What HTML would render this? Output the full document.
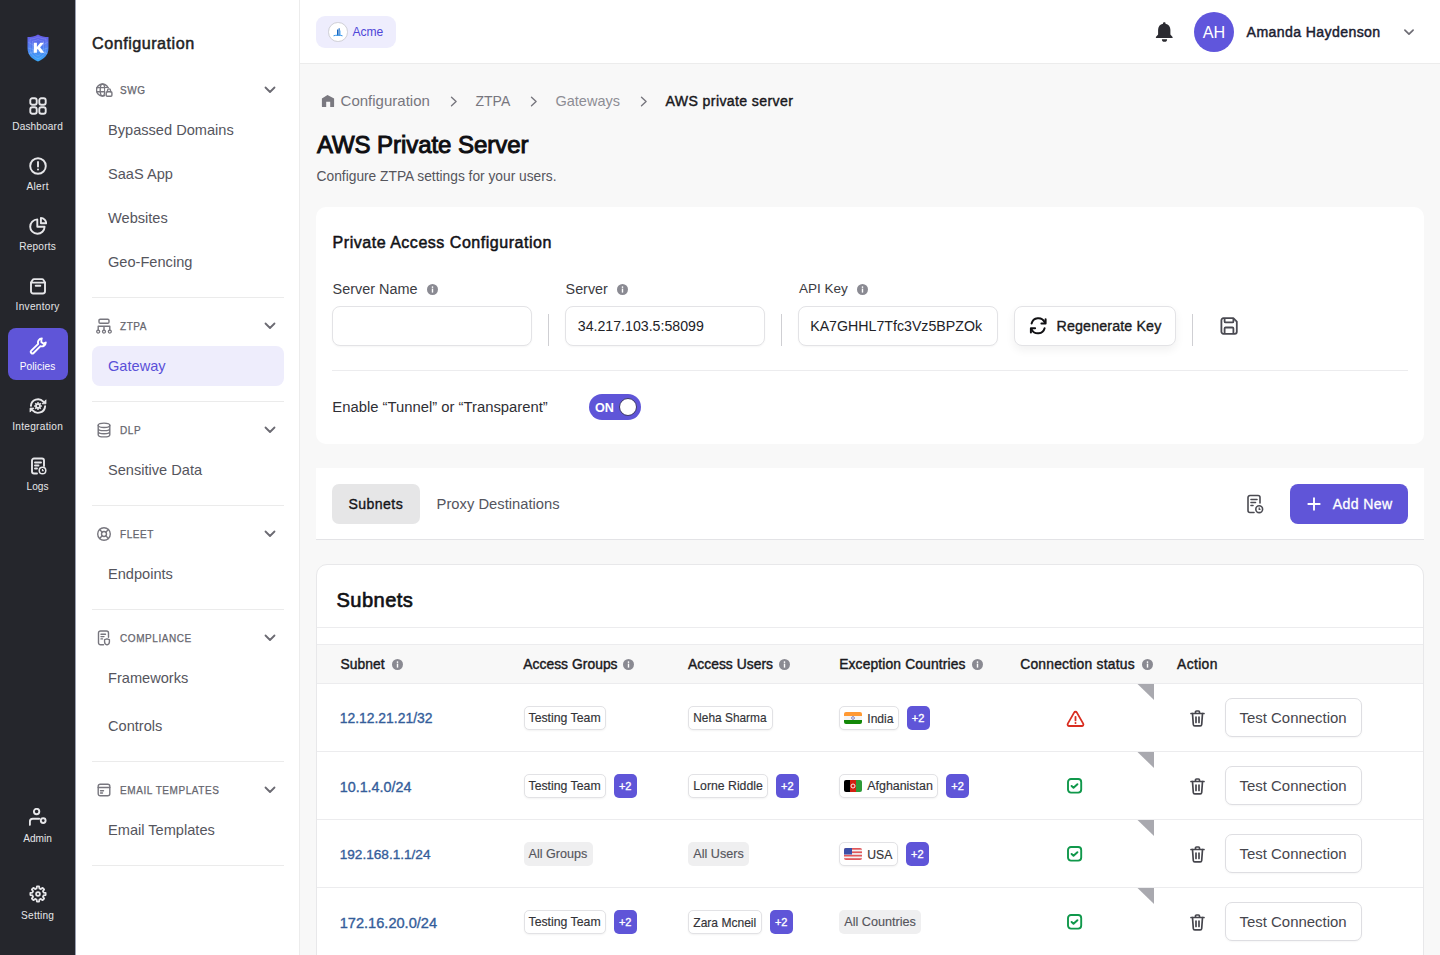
<!DOCTYPE html>
<html><head><meta charset="utf-8"><title>AWS Private Server</title>
<style>
*{box-sizing:border-box;margin:0;padding:0}
html,body{width:1440px;height:955px;overflow:hidden;background:#f8f8f8;font-family:"Liberation Sans",sans-serif}
.a{position:absolute;display:block}
.t{position:absolute;line-height:1;white-space:nowrap}
</style></head><body>
<div class="a" style="left:0px;top:0px;width:75px;height:955px;background:#25262c"></div>
<div class="a" style="left:75px;top:0px;width:1px;height:955px;background:#9a9fb0"></div>
<div class="a" style="left:76px;top:0px;width:223px;height:955px;background:#fff"></div>
<div class="a" style="left:299px;top:0px;width:1px;height:955px;background:#ececec"></div>
<div class="a" style="left:300px;top:0px;width:1140px;height:63px;background:#fff"></div>
<div class="a" style="left:300px;top:63px;width:1140px;height:1px;background:#ececec"></div>
<svg class="a" style="left:27px;top:34px;" width="22" height="28" viewBox="0 0 22 28"><defs><linearGradient id="lg" x1="0" y1="0" x2="0" y2="1"><stop offset="0" stop-color="#6a5ae8"/><stop offset="0.5" stop-color="#4d7ff0"/><stop offset="1" stop-color="#3aa8f8"/></linearGradient></defs>
<path d="M11 0.5 C8 2.5 4 3 0.5 3 V14 C0.5 21 5 25 11 27.5 C17 25 21.5 21 21.5 14 V3 C18 3 14 2.5 11 0.5Z" fill="url(#lg)"/>
<clipPath id="shc"><path d="M11 0.5 C8 2.5 4 3 0.5 3 V14 C0.5 21 5 25 11 27.5 C17 25 21.5 21 21.5 14 V3 C18 3 14 2.5 11 0.5Z"/></clipPath><g clip-path="url(#shc)" fill="none" stroke="#b9d4ff" stroke-opacity="0.45" stroke-width="0.5"><path d="M11 3 C8.5 4.5 5.5 5 3 5 V14 C3 19.5 6.5 22.8 11 24.8 C15.5 22.8 19 19.5 19 14 V5 C16.5 5 13.5 4.5 11 3Z"/><path d="M11 5.5 C9 6.6 7 7 5.5 7 V14 C5.5 18 8 20.6 11 22 C14 20.6 16.5 18 16.5 14 V7 C15 7 13 6.6 11 5.5Z"/><path d="M1 8l20 12M21 8L1 20M1 14l20 6M21 14L1 20"/></g><path d="M6.8 8.8h3.1v4.1l3.4-4.1h3.7l-3.9 4.4 4.1 5.6h-3.7l-2.7-3.8-.9 1v2.8H6.8z" fill="#fff"/></svg>
<div class="a" style="left:8px;top:328px;width:60px;height:52px;background:#5f55d8;border-radius:8px"></div>
<div class="t" style="left:0.07px;width:75px;text-align:center;top:121.85px;font-size:10.1px;letter-spacing:0.143px;color:#e6e6e9">Dashboard</div>
<div class="t" style="left:0.15px;width:75px;text-align:center;top:181.75px;font-size:10.1px;letter-spacing:0.307px;color:#e6e6e9">Alert</div>
<div class="t" style="left:0.11px;width:75px;text-align:center;top:241.75px;font-size:10.1px;letter-spacing:0.219px;color:#e6e6e9">Reports</div>
<div class="t" style="left:0.14px;width:75px;text-align:center;top:301.75px;font-size:10.1px;letter-spacing:0.284px;color:#e6e6e9">Inventory</div>
<div class="t" style="left:0.06px;width:75px;text-align:center;top:361.75px;font-size:10.1px;letter-spacing:0.124px;color:#fff">Policies</div>
<div class="t" style="left:0.14px;width:75px;text-align:center;top:421.75px;font-size:10.1px;letter-spacing:0.288px;color:#e6e6e9">Integration</div>
<div class="t" style="left:0.02px;width:75px;text-align:center;top:481.75px;font-size:10.1px;letter-spacing:0.048px;color:#e6e6e9">Logs</div>
<div class="t" style="left:-0.01px;width:75px;text-align:center;top:833.75px;font-size:10.1px;letter-spacing:-0.027px;color:#e6e6e9">Admin</div>
<div class="t" style="left:0.11px;width:75px;text-align:center;top:910.55px;font-size:10.1px;letter-spacing:0.223px;color:#e6e6e9">Setting</div>
<svg class="a" style="left:29px;top:97px;" width="18" height="18" viewBox="0 0 18 18"><g fill="none" stroke="#e6e6e9" stroke-width="1.9" stroke-linecap="round" stroke-linejoin="round"><rect x="1.3" y="1.3" width="6.4" height="6.4" rx="2"/><rect x="10.3" y="1.3" width="6.4" height="6.4" rx="2"/><rect x="1.3" y="10.3" width="6.4" height="6.4" rx="2"/><rect x="10.3" y="10.3" width="6.4" height="6.4" rx="2"/></g></svg>
<svg class="a" style="left:29px;top:157px;" width="18" height="18" viewBox="0 0 18 18"><g fill="none" stroke="#e6e6e9" stroke-width="1.9" stroke-linecap="round" stroke-linejoin="round"><circle cx="9" cy="9" r="7.8"/><path d="M9 5v4.5"/></g><circle cx="9" cy="12.4" r="1" fill="#e6e6e9"/></svg>
<svg class="a" style="left:29px;top:217px;" width="18" height="18" viewBox="0 0 18 18"><g fill="none" stroke="#e6e6e9" stroke-width="1.9" stroke-linecap="round" stroke-linejoin="round"><path d="M8.3 2.4A7.2 7.2 0 1 0 15.6 9.7H8.3Z"/><path d="M11.9 1V6.3h5.3A5.3 5.3 0 0 0 11.9 1Z"/></g></svg>
<svg class="a" style="left:29px;top:277px;" width="18" height="18" viewBox="0 0 18 18"><g fill="none" stroke="#e6e6e9" stroke-width="1.9" stroke-linecap="round" stroke-linejoin="round"><path d="M2 5.6L3.6 2.9A1.6 1.6 0 0 1 5 2.1H13A1.6 1.6 0 0 1 14.4 2.9L16 5.6V14.3A2.2 2.2 0 0 1 13.8 16.5H4.2A2.2 2.2 0 0 1 2 14.3Z"/><path d="M2 5.6H16"/><path d="M6.7 8.7H11.3"/></g></svg>
<svg class="a" style="left:29px;top:337px;" width="18" height="18" viewBox="0 0 18 18"><path d="M12.8 1.5a4 4 0 0 0-3.6 5.3L2.3 13.7a1.6 1.6 0 0 0 2.3 2.3l6.9-6.9a4 4 0 0 0 5.3-3.6l-2.3 1.2-2-1.4-.2-2.4z" fill="none" stroke="#fff" stroke-width="1.9" stroke-linejoin="round"/></svg>
<svg class="a" style="left:29px;top:397px;" width="18" height="18" viewBox="0 0 18 18"><g fill="none" stroke="#e6e6e9" stroke-width="1.9" stroke-linecap="round"><path d="M1.9 8.8A7.1 7.1 0 0 1 14.3 4.7"/><path d="M16.1 9.3A7.1 7.1 0 0 1 3.7 13.4"/></g><g fill="#e6e6e9" stroke="#e6e6e9" stroke-width="0.8" stroke-linejoin="round"><path d="M17 2.8V6.8H13z"/><path d="M1 15.1V11.1H5z"/></g><rect x="8.2" y="5.1" width="1.6" height="2" rx="0.4" transform="rotate(0 9 9)" fill="#e6e6e9"/><rect x="8.2" y="5.1" width="1.6" height="2" rx="0.4" transform="rotate(45 9 9)" fill="#e6e6e9"/><rect x="8.2" y="5.1" width="1.6" height="2" rx="0.4" transform="rotate(90 9 9)" fill="#e6e6e9"/><rect x="8.2" y="5.1" width="1.6" height="2" rx="0.4" transform="rotate(135 9 9)" fill="#e6e6e9"/><rect x="8.2" y="5.1" width="1.6" height="2" rx="0.4" transform="rotate(180 9 9)" fill="#e6e6e9"/><rect x="8.2" y="5.1" width="1.6" height="2" rx="0.4" transform="rotate(225 9 9)" fill="#e6e6e9"/><rect x="8.2" y="5.1" width="1.6" height="2" rx="0.4" transform="rotate(270 9 9)" fill="#e6e6e9"/><rect x="8.2" y="5.1" width="1.6" height="2" rx="0.4" transform="rotate(315 9 9)" fill="#e6e6e9"/><circle cx="9" cy="9" r="2.7" fill="#e6e6e9"/><circle cx="9" cy="9" r="1.1" fill="#25262c"/></svg>
<svg class="a" style="left:29px;top:457px;" width="18" height="18" viewBox="0 0 18 18"><g fill="none" stroke="#e6e6e9" stroke-width="1.9" stroke-linecap="round" stroke-linejoin="round"><path d="M8 16.5H5a2 2 0 0 1-2-2v-11a2 2 0 0 1 2-2h8a2 2 0 0 1 2 2V9"/><path d="M6 5.5h6M6 8.5h3.5M6 11.5h2"/></g><circle cx="13.5" cy="13.5" r="3.3" fill="none" stroke="#e6e6e9" stroke-width="1.5"/><path d="M13.5 12v1.6h1.2" fill="none" stroke="#e6e6e9" stroke-width="1.2"/></svg>
<svg class="a" style="left:29px;top:808px;" width="18" height="19" viewBox="0 0 18 19"><g fill="none" stroke="#e6e6e9" stroke-width="1.9" stroke-linecap="round" stroke-linejoin="round"><circle cx="7.6" cy="3.6" r="2.7"/><path d="M0.9 16.8v-3.2a2.8 2.8 0 0 1 2.8-2.8h6.5"/><circle cx="14.2" cy="12.6" r="2.4"/></g></svg>
<svg class="a" style="left:29px;top:885px;" width="18" height="18" viewBox="0 0 18 18"><path d="M7.52 3.49 L7.93 1.37 L10.07 1.37 L10.48 3.49 L11.85 4.06 L13.63 2.85 L15.15 4.37 L13.94 6.15 L14.51 7.52 L16.63 7.93 L16.63 10.07 L14.51 10.48 L13.94 11.85 L15.15 13.63 L13.63 15.15 L11.85 13.94 L10.48 14.51 L10.07 16.63 L7.93 16.63 L7.52 14.51 L6.15 13.94 L4.37 15.15 L2.85 13.63 L4.06 11.85 L3.49 10.48 L1.37 10.07 L1.37 7.93 L3.49 7.52 L4.06 6.15 L2.85 4.37 L4.37 2.85 L6.15 4.06Z" fill="none" stroke="#e6e6e9" stroke-width="1.8" stroke-linejoin="round"/><circle cx="9" cy="9" r="1.9" fill="none" stroke="#e6e6e9" stroke-width="1.8"/></svg>
<div class="t" style="left:92px;top:35.09px;font-size:16.2px;color:#1f1f24;letter-spacing:0.488px;-webkit-text-stroke:0.5px #1f1f24">Configuration</div>
<div class="t" style="left:120px;top:85.53px;font-size:10px;color:#66666e;letter-spacing:0.57px;-webkit-text-stroke:0.25px #66666e">SWG</div>
<svg class="a" style="left:264px;top:85.7px;" width="12" height="8" viewBox="0 0 12 8"><path d="M1.5 1.5l4.5 4.5 4.5-4.5" fill="none" stroke="#6b6a72" stroke-width="1.8" stroke-linecap="round" stroke-linejoin="round"/></svg>
<svg class="a" style="left:96px;top:83px;" width="17" height="15" viewBox="0 0 17 15"><g fill="none" stroke="#77767e" stroke-width="1.4" stroke-linecap="round" stroke-linejoin="round"><circle cx="6.5" cy="7" r="6"/><ellipse cx="6.5" cy="7" rx="2.3" ry="6"/><path d="M0.8 4.6h11.4M0.8 8.8h11.4"/></g><rect x="9.2" y="5.2" width="7.6" height="9.8" fill="#fff"/><g fill="none" stroke="#77767e" stroke-width="1.4" stroke-linecap="round" stroke-linejoin="round"><rect x="10.2" y="8.7" width="5.7" height="4.5" rx="1"/><path d="M11.5 8.7V7.4a1.5 1.5 0 0 1 3 0v1.3"/></g></svg>
<div class="t" style="left:108px;top:122.64px;font-size:14.6px;color:#55555d;">Bypassed Domains</div>
<div class="t" style="left:108px;top:166.64px;font-size:14.6px;color:#55555d;">SaaS App</div>
<div class="t" style="left:108px;top:210.64px;font-size:14.6px;color:#55555d;">Websites</div>
<div class="t" style="left:108px;top:254.64px;font-size:14.6px;color:#55555d;">Geo-Fencing</div>
<div class="a" style="left:92px;top:297px;width:192px;height:1px;background:#ebebeb"></div>
<div class="t" style="left:120px;top:321.84px;font-size:10px;color:#66666e;letter-spacing:0.57px;-webkit-text-stroke:0.25px #66666e">ZTPA</div>
<svg class="a" style="left:264px;top:322.0px;" width="12" height="8" viewBox="0 0 12 8"><path d="M1.5 1.5l4.5 4.5 4.5-4.5" fill="none" stroke="#6b6a72" stroke-width="1.8" stroke-linecap="round" stroke-linejoin="round"/></svg>
<svg class="a" style="left:96px;top:318px;" width="16" height="16" viewBox="0 0 16 16"><g fill="none" stroke="#77767e" stroke-width="1.4" stroke-linecap="round" stroke-linejoin="round"><rect x="3" y="1.2" width="10" height="4" rx="1.2"/><path d="M2.2 12.5V8.2h11.6v4.3M8 8.2v4.3"/></g><g fill="none" stroke="#77767e" stroke-width="1.3"><circle cx="2.2" cy="13.6" r="1.5"/><circle cx="8" cy="13.6" r="1.5"/><circle cx="13.8" cy="13.6" r="1.5"/></g></svg>
<div class="a" style="left:92px;top:346px;width:192px;height:40px;background:#eeedfc;border-radius:8px"></div>
<div class="t" style="left:108px;top:358.64px;font-size:14.6px;color:#5a50d8;">Gateway</div>
<div class="a" style="left:92px;top:401px;width:192px;height:1px;background:#ebebeb"></div>
<div class="t" style="left:120px;top:425.54px;font-size:10px;color:#66666e;letter-spacing:0.57px;-webkit-text-stroke:0.25px #66666e">DLP</div>
<svg class="a" style="left:264px;top:425.7px;" width="12" height="8" viewBox="0 0 12 8"><path d="M1.5 1.5l4.5 4.5 4.5-4.5" fill="none" stroke="#6b6a72" stroke-width="1.8" stroke-linecap="round" stroke-linejoin="round"/></svg>
<svg class="a" style="left:96px;top:422px;" width="16" height="16" viewBox="0 0 16 16"><g fill="none" stroke="#77767e" stroke-width="1.4" stroke-linecap="round" stroke-linejoin="round"><ellipse cx="8" cy="3.3" rx="5.8" ry="2.2"/><path d="M2.2 3.3v9.4c0 1.2 2.6 2.2 5.8 2.2s5.8-1 5.8-2.2V3.3M2.2 6.4c0 1.2 2.6 2.2 5.8 2.2s5.8-1 5.8-2.2M2.2 9.5c0 1.2 2.6 2.2 5.8 2.2s5.8-1 5.8-2.2"/></g></svg>
<div class="t" style="left:108px;top:462.64px;font-size:14.6px;color:#55555d;">Sensitive Data</div>
<div class="a" style="left:92px;top:505px;width:192px;height:1px;background:#ebebeb"></div>
<div class="t" style="left:120px;top:529.74px;font-size:10px;color:#66666e;letter-spacing:0.57px;-webkit-text-stroke:0.25px #66666e">FLEET</div>
<svg class="a" style="left:264px;top:529.9000000000001px;" width="12" height="8" viewBox="0 0 12 8"><path d="M1.5 1.5l4.5 4.5 4.5-4.5" fill="none" stroke="#6b6a72" stroke-width="1.8" stroke-linecap="round" stroke-linejoin="round"/></svg>
<svg class="a" style="left:96px;top:526px;" width="16" height="16" viewBox="0 0 16 16"><g fill="none" stroke="#77767e" stroke-width="1.4" stroke-linecap="round" stroke-linejoin="round"><circle cx="8" cy="8" r="6.3"/><circle cx="8" cy="8" r="2.5"/><path d="M3.6 3.6l2.6 2.6M12.4 3.6l-2.6 2.6M3.6 12.4l2.6-2.6M12.4 12.4l-2.6-2.6"/></g></svg>
<div class="t" style="left:108px;top:566.64px;font-size:14.6px;color:#55555d;">Endpoints</div>
<div class="a" style="left:92px;top:609px;width:192px;height:1px;background:#ebebeb"></div>
<div class="t" style="left:120px;top:633.83px;font-size:10px;color:#66666e;letter-spacing:0.57px;-webkit-text-stroke:0.25px #66666e">COMPLIANCE</div>
<svg class="a" style="left:264px;top:634.0px;" width="12" height="8" viewBox="0 0 12 8"><path d="M1.5 1.5l4.5 4.5 4.5-4.5" fill="none" stroke="#6b6a72" stroke-width="1.8" stroke-linecap="round" stroke-linejoin="round"/></svg>
<svg class="a" style="left:97px;top:630px;" width="14" height="16" viewBox="0 0 14 16"><g fill="none" stroke="#77767e" stroke-width="1.4" stroke-linecap="round" stroke-linejoin="round"><path d="M6.5 14.8H3.5a2 2 0 0 1-2-2V3a2 2 0 0 1 2-2h6a2 2 0 0 1 2 2v4.3"/><path d="M4 4.3h4.5M4 6.6h3M4 8.9h1.5"/><path d="M10 8.8l2.4.8v2.3c0 1.6-1.1 2.6-2.4 3-1.3-.4-2.4-1.4-2.4-3V9.6z"/></g></svg>
<div class="t" style="left:108px;top:670.84px;font-size:14.6px;color:#55555d;">Frameworks</div>
<div class="t" style="left:108px;top:718.74px;font-size:14.6px;color:#55555d;">Controls</div>
<div class="a" style="left:92px;top:761px;width:192px;height:1px;background:#ebebeb"></div>
<div class="t" style="left:120px;top:785.83px;font-size:10px;color:#66666e;letter-spacing:0.57px;-webkit-text-stroke:0.25px #66666e">EMAIL TEMPLATES</div>
<svg class="a" style="left:264px;top:786.0px;" width="12" height="8" viewBox="0 0 12 8"><path d="M1.5 1.5l4.5 4.5 4.5-4.5" fill="none" stroke="#6b6a72" stroke-width="1.8" stroke-linecap="round" stroke-linejoin="round"/></svg>
<svg class="a" style="left:97px;top:783px;" width="14" height="14" viewBox="0 0 14 14"><g fill="none" stroke="#77767e" stroke-width="1.4" stroke-linecap="round" stroke-linejoin="round"><rect x="1.2" y="1.2" width="11.6" height="11.6" rx="2"/><path d="M1.2 4.5h11.6M3.5 7.7h3M3.5 10h2"/></g></svg>
<div class="t" style="left:108px;top:822.84px;font-size:14.6px;color:#55555d;">Email Templates</div>
<div class="a" style="left:92px;top:865px;width:192px;height:1px;background:#ebebeb"></div>
<div class="a" style="left:316px;top:16px;width:80px;height:32px;background:#eeedfd;border-radius:9px"></div>
<div class="a" style="left:328.3px;top:22.2px;width:19.5px;height:19.5px;background:#fff;border:1px solid #cfcfd6;border-radius:50%"></div>
<svg class="a" style="left:330.8px;top:24.8px;" width="14" height="14" viewBox="0 0 14 14"><path d="M6 4.5h1.2v6H6zM7.6 3.2h1.1v7.3H7.6z" fill="#1565c0"/><path d="M8.8 5.5h1v5h-1z" fill="#90caf9"/><path d="M2.5 10.8c2-.8 7-.8 9 0" fill="none" stroke="#1e88e5" stroke-width="0.9"/></svg>
<div class="t" style="left:352.4px;top:26.36px;font-size:12.1px;color:#4f46d8;">Acme</div>
<svg class="a" style="left:1155px;top:21px;" width="19" height="22" viewBox="0 0 19 22"><path d="M9.5 1.2c.6 0 1 .4 1 .9v.6c3.1.6 4.9 3 4.9 6v4.8l2.2 2.4v1H0.9v-1l2.2-2.4V8.7c0-3 1.8-5.4 4.9-6v-.6c0-.5.4-.9 1-.9z" fill="#2b2b31"/><path d="M6.9 18.2h5.2a2.6 2.6 0 0 1-5.2 0z" fill="#2b2b31"/></svg>
<div class="a" style="left:1194px;top:12px;width:40px;height:40px;background:#6056dc;border-radius:50%"></div>
<div class="t" style="left:1194px;width:40px;text-align:center;top:24.29px;font-size:16.2px;color:#fff">AH</div>
<div class="t" style="left:1246.6px;top:25.36px;font-size:14.11px;color:#1b2030;letter-spacing:0.383px;-webkit-text-stroke:0.45px #1b2030">Amanda Haydenson</div>
<svg class="a" style="left:1403px;top:28px;" width="12" height="8" viewBox="0 0 12 8"><path d="M1.9 2.1l4.1 4 4.1-4" fill="none" stroke="#6e6d75" stroke-width="1.7" stroke-linecap="round" stroke-linejoin="round"/></svg>
<svg class="a" style="left:321px;top:94px;" width="14" height="14" viewBox="0 0 14 14"><path d="M6.5 0.9L13.1 4.5V12.5a0.6 0.6 0 0 1-0.6 0.6H9.2V7.7H5.2V13.1H1.5a0.6 0.6 0 0 1-0.6-0.6V4.5z" fill="#7a7980"/></svg>
<div class="t" style="left:340.6px;top:93.10px;font-size:15.0px;color:#77767e;">Configuration</div>
<svg class="a" style="left:449.5px;top:96px;" width="8" height="11" viewBox="0 0 8 11"><path d="M1.5 1.2l4.6 4.3-4.6 4.3" fill="none" stroke="#77767e" stroke-width="1.4" stroke-linecap="round" stroke-linejoin="round"/></svg>
<div class="t" style="left:475.5px;top:93.95px;font-size:14.0px;color:#77767e;">ZTPA</div>
<svg class="a" style="left:529.5px;top:96px;" width="8" height="11" viewBox="0 0 8 11"><path d="M1.5 1.2l4.6 4.3-4.6 4.3" fill="none" stroke="#77767e" stroke-width="1.4" stroke-linecap="round" stroke-linejoin="round"/></svg>
<div class="t" style="left:555.5px;top:93.53px;font-size:14.5px;color:#8d8d94;">Gateways</div>
<svg class="a" style="left:639.5px;top:96px;" width="8" height="11" viewBox="0 0 8 11"><path d="M1.5 1.2l4.6 4.3-4.6 4.3" fill="none" stroke="#77767e" stroke-width="1.4" stroke-linecap="round" stroke-linejoin="round"/></svg>
<div class="t" style="left:665.6px;top:93.86px;font-size:14.11px;color:#18181c;letter-spacing:0.372px;-webkit-text-stroke:0.42px #18181c">AWS private server</div>
<div class="t" style="left:316.9px;top:132.57px;font-size:24.02px;color:#0e0e11;letter-spacing:-0.065px;-webkit-text-stroke:0.95px #0e0e11">AWS Private Server</div>
<div class="t" style="left:316.6px;top:169.94px;font-size:13.77px;color:#55555c;">Configure ZTPA settings for your users.</div>
<div class="a" style="left:316px;top:207px;width:1108px;height:237px;background:#fff;border-radius:10px"></div>
<div class="t" style="left:332.6px;top:234.31px;font-size:16.06px;color:#121216;letter-spacing:0.503px;-webkit-text-stroke:0.5px #121216">Private Access Configuration</div>
<div class="t" style="left:332.6px;top:281.69px;font-size:14.43px;color:#3b3b42;">Server Name</div>
<svg class="a" style="left:426.5px;top:284.0px;" width="11" height="11" viewBox="0 0 11 11"><circle cx="5.5" cy="5.5" r="5.5" fill="#8a8a92"/><rect x="4.8" y="4.6" width="1.4" height="4" fill="#fff"/><circle cx="5.5" cy="3.1" r="0.85" fill="#fff"/></svg>
<div class="t" style="left:565.6px;top:281.77px;font-size:14.33px;color:#3b3b42;">Server</div>
<svg class="a" style="left:616.5px;top:284.0px;" width="11" height="11" viewBox="0 0 11 11"><circle cx="5.5" cy="5.5" r="5.5" fill="#8a8a92"/><rect x="4.8" y="4.6" width="1.4" height="4" fill="#fff"/><circle cx="5.5" cy="3.1" r="0.85" fill="#fff"/></svg>
<div class="t" style="left:798.9px;top:282.44px;font-size:13.54px;color:#3b3b42;">API Key</div>
<svg class="a" style="left:856.5px;top:284.0px;" width="11" height="11" viewBox="0 0 11 11"><circle cx="5.5" cy="5.5" r="5.5" fill="#8a8a92"/><rect x="4.8" y="4.6" width="1.4" height="4" fill="#fff"/><circle cx="5.5" cy="3.1" r="0.85" fill="#fff"/></svg>
<div class="a" style="left:332px;top:306px;width:200px;height:40px;background:#fff;border:1px solid #e3e3e6;border-radius:8px;box-shadow:0 1px 2px rgba(0,0,0,0.04)"></div>
<div class="a" style="left:548px;top:314px;width:1px;height:32px;background:#cfcfd3"></div>
<div class="a" style="left:565px;top:306px;width:200px;height:40px;background:#fff;border:1px solid #e3e3e6;border-radius:8px;box-shadow:0 1px 2px rgba(0,0,0,0.04)"></div>
<div class="t" style="left:577.8px;top:318.81px;font-size:14.16px;color:#222227;">34.217.103.5:58099</div>
<div class="a" style="left:781px;top:314px;width:1px;height:32px;background:#cfcfd3"></div>
<div class="a" style="left:798px;top:306px;width:200px;height:40px;background:#fff;border:1px solid #e3e3e6;border-radius:8px;box-shadow:0 1px 2px rgba(0,0,0,0.04)"></div>
<div class="t" style="left:810.2px;top:318.78px;font-size:14.2px;color:#222227;">KA7GHHL7Tfc3Vz5BPZOk</div>
<div class="a" style="left:1014px;top:306px;width:162px;height:40px;background:#fff;border:1px solid #e3e3e6;border-radius:8px;box-shadow:0 4px 10px rgba(0,0,0,0.06)"></div>
<svg class="a" style="left:1029px;top:317px;" width="18" height="18" viewBox="0 0 18 18"><g fill="none" stroke="#111114" stroke-width="2" stroke-linecap="round" stroke-linejoin="round"><path d="M2.6 6.5A6.9 6.9 0 0 1 15.6 5.2"/><path d="M16.6 2.3V6.6H12.4"/><path d="M15.6 11.2A6.9 6.9 0 0 1 2.8 12.6"/><path d="M1.9 15.6V11.2H6.1"/></g></svg>
<div class="t" style="left:1056.6px;top:319.24px;font-size:14.25px;color:#1b1b20;letter-spacing:0.130px;-webkit-text-stroke:0.35px #1b1b20">Regenerate Key</div>
<div class="a" style="left:1192px;top:314px;width:1px;height:32px;background:#cfcfd3"></div>
<svg class="a" style="left:1219px;top:316.5px;" width="20" height="19" viewBox="0 0 20 19"><g fill="none" stroke="#4a4a52" stroke-width="1.8" stroke-linejoin="round"><path d="M2.4 3.2a2 2 0 0 1 2-2h9.9l3.5 3.5v10.1a2 2 0 0 1-2 2H4.4a2 2 0 0 1-2-2z"/><path d="M5.6 1.2v3.2a1 1 0 0 0 1 1h6.8a1 1 0 0 0 1-1V1.6"/><path d="M5.6 16.8v-5.3a1 1 0 0 1 1-1h6.8a1 1 0 0 1 1 1v5.3"/></g></svg>
<div class="a" style="left:332px;top:370px;width:1076px;height:1px;background:#ececee"></div>
<div class="t" style="left:332.3px;top:400.35px;font-size:14.82px;color:#2f2f35;">Enable “Tunnel” or “Transparent”</div>
<div class="a" style="left:589px;top:394px;width:52px;height:26px;background:#5f55d8;border-radius:13px"></div>
<div class="t" style="left:595px;top:402.07px;font-size:12.67px;color:#fff;font-weight:700;">ON</div>
<div class="a" style="left:619px;top:398px;width:18px;height:18px;background:#fff;border:1.2px solid #3b3766;border-radius:50%"></div>
<div class="a" style="left:316px;top:468px;width:1108px;height:71px;background:#fff"></div>
<div class="a" style="left:316px;top:539px;width:1108px;height:1px;background:#e3e3e6"></div>
<div class="a" style="left:332px;top:484px;width:88px;height:40px;background:#e6e6e7;border-radius:7px"></div>
<div class="t" style="left:348.4px;top:497.26px;font-size:14.11px;color:#141418;letter-spacing:0.431px;-webkit-text-stroke:0.35px #141418">Subnets</div>
<div class="t" style="left:436.6px;top:496.91px;font-size:14.75px;color:#55555e;">Proxy Destinations</div>
<svg class="a" style="left:1246px;top:494px;" width="18" height="20" viewBox="0 0 18 20"><g fill="none" stroke="#4b4b52" stroke-width="1.6" stroke-linecap="round" stroke-linejoin="round"><path d="M8 18.5H4a2 2 0 0 1-2-2v-13a2 2 0 0 1 2-2h8a2 2 0 0 1 2 2v5.5"/><path d="M5 5.5h6M5 8.5h4.5M5 11.5h2"/></g><circle cx="13.2" cy="15.2" r="3.4" fill="none" stroke="#4b4b52" stroke-width="1.6"/><path d="M13.2 13.6v1.8h1.3" fill="none" stroke="#4b4b52" stroke-width="1.2"/></svg>
<div class="a" style="left:1290px;top:484px;width:118px;height:40px;background:#6055d8;border-radius:8px"></div>
<svg class="a" style="left:1306px;top:496px;" width="16" height="16" viewBox="0 0 16 16"><path d="M8 1.6v12.8M1.6 8h12.8" stroke="#fff" stroke-width="1.9" stroke-linecap="butt"/></svg>
<div class="t" style="left:1332.8px;top:496.96px;font-size:14.11px;color:#fff;letter-spacing:0.363px;-webkit-text-stroke:0.3px #fff">Add New</div>
<div class="a" style="left:316px;top:564px;width:1108px;height:420px;background:#fff;border:1px solid #e8e8ea;border-radius:11px"></div>
<div class="t" style="left:336.4px;top:589.98px;font-size:20.11px;color:#111114;letter-spacing:0.457px;-webkit-text-stroke:0.65px #111114">Subnets</div>
<div class="a" style="left:317px;top:627px;width:1106px;height:1px;background:#ececee"></div>
<div class="a" style="left:317px;top:644px;width:1106px;height:40px;background:#f8f8f8;border-top:1px solid #ececee;border-bottom:1px solid #ececee"></div>
<div class="t" style="left:340.4px;top:657.59px;font-size:13.83px;color:#1a1a1e;letter-spacing:0.076px;-webkit-text-stroke:0.42px #1a1a1e">Subnet</div>
<svg class="a" style="left:391.5px;top:658.5px;" width="11" height="11" viewBox="0 0 11 11"><circle cx="5.5" cy="5.5" r="5.5" fill="#8a8a92"/><rect x="4.8" y="4.6" width="1.4" height="4" fill="#fff"/><circle cx="5.5" cy="3.1" r="0.85" fill="#fff"/></svg>
<div class="t" style="left:523.2px;top:657.59px;font-size:13.83px;color:#1a1a1e;letter-spacing:0.049px;-webkit-text-stroke:0.42px #1a1a1e">Access Groups</div>
<svg class="a" style="left:623.0px;top:658.5px;" width="11" height="11" viewBox="0 0 11 11"><circle cx="5.5" cy="5.5" r="5.5" fill="#8a8a92"/><rect x="4.8" y="4.6" width="1.4" height="4" fill="#fff"/><circle cx="5.5" cy="3.1" r="0.85" fill="#fff"/></svg>
<div class="t" style="left:688px;top:657.59px;font-size:13.83px;color:#1a1a1e;letter-spacing:0.039px;-webkit-text-stroke:0.42px #1a1a1e">Access Users</div>
<svg class="a" style="left:779.2px;top:658.5px;" width="11" height="11" viewBox="0 0 11 11"><circle cx="5.5" cy="5.5" r="5.5" fill="#8a8a92"/><rect x="4.8" y="4.6" width="1.4" height="4" fill="#fff"/><circle cx="5.5" cy="3.1" r="0.85" fill="#fff"/></svg>
<div class="t" style="left:839.2px;top:657.59px;font-size:13.83px;color:#1a1a1e;letter-spacing:0.139px;-webkit-text-stroke:0.42px #1a1a1e">Exception Countries</div>
<svg class="a" style="left:972.4px;top:658.5px;" width="11" height="11" viewBox="0 0 11 11"><circle cx="5.5" cy="5.5" r="5.5" fill="#8a8a92"/><rect x="4.8" y="4.6" width="1.4" height="4" fill="#fff"/><circle cx="5.5" cy="3.1" r="0.85" fill="#fff"/></svg>
<div class="t" style="left:1020.2px;top:657.59px;font-size:13.83px;color:#1a1a1e;letter-spacing:0.229px;-webkit-text-stroke:0.42px #1a1a1e">Connection status</div>
<svg class="a" style="left:1141.5px;top:658.5px;" width="11" height="11" viewBox="0 0 11 11"><circle cx="5.5" cy="5.5" r="5.5" fill="#8a8a92"/><rect x="4.8" y="4.6" width="1.4" height="4" fill="#fff"/><circle cx="5.5" cy="3.1" r="0.85" fill="#fff"/></svg>
<div class="t" style="left:1177.1px;top:657.59px;font-size:13.83px;color:#1a1a1e;letter-spacing:0.361px;-webkit-text-stroke:0.42px #1a1a1e">Action</div>
<svg class="a" style="left:1137px;top:684px;" width="17" height="16" viewBox="0 0 17 16"><path d="M0.5 0H17V16z" fill="#a9a9af"/></svg>
<div class="t" style="left:339.7px;top:712.23px;font-size:13.91px;color:#345d9a;-webkit-text-stroke:0.35px #345d9a">12.12.21.21/32</div>
<div class="a" style="left:523.5px;top:706px;width:82.2px;height:23.5px;background:#fff;border:1px solid #e2e2e5;border-radius:5px;box-shadow:0 1px 2px rgba(0,0,0,0.05)"></div>
<div class="t" style="left:528.5px;top:712.40px;font-size:12.29px;color:#333338;-webkit-text-stroke:0.15px #333338">Testing Team</div>
<div class="a" style="left:688.3px;top:706px;width:84.7px;height:23.5px;background:#fff;border:1px solid #e2e2e5;border-radius:5px;box-shadow:0 1px 2px rgba(0,0,0,0.05)"></div>
<div class="t" style="left:693.3px;top:712.74px;font-size:11.88px;color:#333338;-webkit-text-stroke:0.15px #333338">Neha Sharma</div>
<div class="a" style="left:839.3px;top:706px;width:59.3px;height:23.5px;background:#fff;border:1px solid #e2e2e5;border-radius:5px;box-shadow:0 1px 2px rgba(0,0,0,0.05)"></div>
<svg class="a" style="left:844.3px;top:712px;" width="18" height="12" viewBox="0 0 18 12"><defs><clipPath id="cf"><rect width="18" height="12" rx="2"/></clipPath></defs><g clip-path="url(#cf)"><rect width="18" height="4" fill="#ff9933"/><rect y="4" width="18" height="4" fill="#f5f5f5"/><rect y="8" width="18" height="4" fill="#138808"/><circle cx="9" cy="6" r="1.4" fill="none" stroke="#3a3aa0" stroke-width="0.6"/></g></svg>
<div class="t" style="left:867.3px;top:712.57px;font-size:12.08px;color:#333338;-webkit-text-stroke:0.15px #333338">India</div>
<div class="a" style="left:906.5999999999999px;top:706px;width:23px;height:24px;background:#5f55d8;border-radius:5px"></div>
<div class="t" style="left:906.5999999999999px;width:23px;text-align:center;top:712.99px;font-size:11px;color:#fff;-webkit-text-stroke:0.35px #fff">+2</div>
<svg class="a" style="left:1066px;top:709.5px;" width="19" height="17" viewBox="0 0 19 17"><path d="M8.1 2.6a1.6 1.6 0 0 1 2.8 0l6.3 11a1.6 1.6 0 0 1-1.4 2.4H3.2a1.6 1.6 0 0 1-1.4-2.4z" fill="none" stroke="#d92d20" stroke-width="1.8" stroke-linejoin="round"/><path d="M9.5 6.8v3.6" stroke="#d92d20" stroke-width="1.8" stroke-linecap="round"/><circle cx="9.5" cy="12.9" r="1" fill="#d92d20"/></svg>
<svg class="a" style="left:1189.5px;top:709.5px;" width="15" height="17" viewBox="0 0 15 17"><g fill="none" stroke="#46464d" stroke-width="1.7" stroke-linecap="round" stroke-linejoin="round"><path d="M1 3.5h13M5.5 3.5V2a1 1 0 0 1 1-1h2a1 1 0 0 1 1 1v1.5"/><path d="M2.5 3.5l.8 11a1.5 1.5 0 0 0 1.5 1.4h5.4a1.5 1.5 0 0 0 1.5-1.4l.8-11"/><path d="M6 7v5.5M9 7v5.5"/></g></svg>
<div class="a" style="left:1224.9px;top:698.1px;width:136.9px;height:39.4px;background:#fff;border:1px solid #dedee2;border-radius:7px;box-shadow:0 1px 2px rgba(0,0,0,0.04)"></div>
<div class="t" style="left:1239.5px;top:711.14px;font-size:14.95px;color:#46464d;">Test Connection</div>
<div class="a" style="left:317px;top:751px;width:1106px;height:1px;background:#ececee"></div>
<svg class="a" style="left:1137px;top:752px;" width="17" height="16" viewBox="0 0 17 16"><path d="M0.5 0H17V16z" fill="#a9a9af"/></svg>
<div class="t" style="left:339.7px;top:779.85px;font-size:14.35px;color:#345d9a;-webkit-text-stroke:0.35px #345d9a">10.1.4.0/24</div>
<div class="a" style="left:523.5px;top:774px;width:82.2px;height:23.5px;background:#fff;border:1px solid #e2e2e5;border-radius:5px;box-shadow:0 1px 2px rgba(0,0,0,0.05)"></div>
<div class="t" style="left:528.5px;top:780.40px;font-size:12.29px;color:#333338;-webkit-text-stroke:0.15px #333338">Testing Team</div>
<div class="a" style="left:613.7px;top:774px;width:23px;height:24px;background:#5f55d8;border-radius:5px"></div>
<div class="t" style="left:613.7px;width:23px;text-align:center;top:780.99px;font-size:11px;color:#fff;-webkit-text-stroke:0.35px #fff">+2</div>
<div class="a" style="left:688.3px;top:774px;width:79.5px;height:23.5px;background:#fff;border:1px solid #e2e2e5;border-radius:5px;box-shadow:0 1px 2px rgba(0,0,0,0.05)"></div>
<div class="t" style="left:693.3px;top:780.42px;font-size:12.26px;color:#333338;-webkit-text-stroke:0.15px #333338">Lorne Riddle</div>
<div class="a" style="left:775.8px;top:774px;width:23px;height:24px;background:#5f55d8;border-radius:5px"></div>
<div class="t" style="left:775.8px;width:23px;text-align:center;top:780.99px;font-size:11px;color:#fff;-webkit-text-stroke:0.35px #fff">+2</div>
<div class="a" style="left:839.3px;top:774px;width:98.7px;height:23.5px;background:#fff;border:1px solid #e2e2e5;border-radius:5px;box-shadow:0 1px 2px rgba(0,0,0,0.05)"></div>
<svg class="a" style="left:844.3px;top:780px;" width="18" height="12" viewBox="0 0 18 12"><defs><clipPath id="cf2"><rect width="18" height="12" rx="2"/></clipPath></defs><g clip-path="url(#cf2)"><rect width="6" height="12" fill="#000"/><rect x="6" width="6" height="12" fill="#d32011"/><rect x="12" width="6" height="12" fill="#2f9a38"/><circle cx="9" cy="6" r="2" fill="none" stroke="#fff" stroke-width="0.9"/></g></svg>
<div class="t" style="left:867.3px;top:780.29px;font-size:12.42px;color:#333338;-webkit-text-stroke:0.15px #333338">Afghanistan</div>
<div class="a" style="left:946.0px;top:774px;width:23px;height:24px;background:#5f55d8;border-radius:5px"></div>
<div class="t" style="left:946.0px;width:23px;text-align:center;top:780.99px;font-size:11px;color:#fff;-webkit-text-stroke:0.35px #fff">+2</div>
<svg class="a" style="left:1067.1px;top:778.2px;" width="15.5" height="16" viewBox="0 0 15.5 16"><rect x="1" y="1" width="13.2" height="13.6" rx="3" fill="none" stroke="#10984b" stroke-width="1.9"/><path d="M4.6 8l1.9 1.7 3.9-3.5" fill="none" stroke="#10984b" stroke-width="2" stroke-linecap="round" stroke-linejoin="round"/></svg>
<svg class="a" style="left:1189.5px;top:777.5px;" width="15" height="17" viewBox="0 0 15 17"><g fill="none" stroke="#46464d" stroke-width="1.7" stroke-linecap="round" stroke-linejoin="round"><path d="M1 3.5h13M5.5 3.5V2a1 1 0 0 1 1-1h2a1 1 0 0 1 1 1v1.5"/><path d="M2.5 3.5l.8 11a1.5 1.5 0 0 0 1.5 1.4h5.4a1.5 1.5 0 0 0 1.5-1.4l.8-11"/><path d="M6 7v5.5M9 7v5.5"/></g></svg>
<div class="a" style="left:1224.9px;top:766.1px;width:136.9px;height:39.4px;background:#fff;border:1px solid #dedee2;border-radius:7px;box-shadow:0 1px 2px rgba(0,0,0,0.04)"></div>
<div class="t" style="left:1239.5px;top:779.14px;font-size:14.95px;color:#46464d;">Test Connection</div>
<div class="a" style="left:317px;top:819px;width:1106px;height:1px;background:#ececee"></div>
<svg class="a" style="left:1137px;top:820px;" width="17" height="16" viewBox="0 0 17 16"><path d="M0.5 0H17V16z" fill="#a9a9af"/></svg>
<div class="t" style="left:339.7px;top:848.47px;font-size:13.62px;color:#345d9a;-webkit-text-stroke:0.35px #345d9a">192.168.1.1/24</div>
<div class="a" style="left:523.5px;top:842px;width:69.7px;height:23.5px;background:#efeff0;border-radius:5px"></div>
<div class="t" style="left:528.5px;top:848.14px;font-size:12.59px;color:#55555c;-webkit-text-stroke:0.15px #55555c">All Groups</div>
<div class="a" style="left:688.3px;top:842px;width:60.6px;height:23.5px;background:#efeff0;border-radius:5px"></div>
<div class="t" style="left:693.3px;top:848.13px;font-size:12.6px;color:#55555c;-webkit-text-stroke:0.15px #55555c">All Users</div>
<div class="a" style="left:839.3px;top:842px;width:58.5px;height:23.5px;background:#fff;border:1px solid #e2e2e5;border-radius:5px;box-shadow:0 1px 2px rgba(0,0,0,0.05)"></div>
<svg class="a" style="left:844.3px;top:848px;" width="18" height="12" viewBox="0 0 18 12"><defs><clipPath id="cf3"><rect width="18" height="12" rx="2"/></clipPath></defs><g clip-path="url(#cf3)"><rect width="18" height="12" fill="#f3f3f3"/><rect y="0" width="18" height="1.7" fill="#e0575a"/><rect y="3.4" width="18" height="1.7" fill="#e0575a"/><rect y="6.8" width="18" height="1.7" fill="#e0575a"/><rect y="10.2" width="18" height="1.8" fill="#e0575a"/><rect width="8" height="6.5" fill="#3c4fa8"/></g></svg>
<div class="t" style="left:867.3px;top:848.51px;font-size:12.16px;color:#333338;-webkit-text-stroke:0.15px #333338">USA</div>
<div class="a" style="left:905.8px;top:842px;width:23px;height:24px;background:#5f55d8;border-radius:5px"></div>
<div class="t" style="left:905.8px;width:23px;text-align:center;top:848.99px;font-size:11px;color:#fff;-webkit-text-stroke:0.35px #fff">+2</div>
<svg class="a" style="left:1067.1px;top:846.2px;" width="15.5" height="16" viewBox="0 0 15.5 16"><rect x="1" y="1" width="13.2" height="13.6" rx="3" fill="none" stroke="#10984b" stroke-width="1.9"/><path d="M4.6 8l1.9 1.7 3.9-3.5" fill="none" stroke="#10984b" stroke-width="2" stroke-linecap="round" stroke-linejoin="round"/></svg>
<svg class="a" style="left:1189.5px;top:845.5px;" width="15" height="17" viewBox="0 0 15 17"><g fill="none" stroke="#46464d" stroke-width="1.7" stroke-linecap="round" stroke-linejoin="round"><path d="M1 3.5h13M5.5 3.5V2a1 1 0 0 1 1-1h2a1 1 0 0 1 1 1v1.5"/><path d="M2.5 3.5l.8 11a1.5 1.5 0 0 0 1.5 1.4h5.4a1.5 1.5 0 0 0 1.5-1.4l.8-11"/><path d="M6 7v5.5M9 7v5.5"/></g></svg>
<div class="a" style="left:1224.9px;top:834.1px;width:136.9px;height:39.4px;background:#fff;border:1px solid #dedee2;border-radius:7px;box-shadow:0 1px 2px rgba(0,0,0,0.04)"></div>
<div class="t" style="left:1239.5px;top:847.14px;font-size:14.95px;color:#46464d;">Test Connection</div>
<div class="a" style="left:317px;top:887px;width:1106px;height:1px;background:#ececee"></div>
<svg class="a" style="left:1137px;top:888px;" width="17" height="16" viewBox="0 0 17 16"><path d="M0.5 0H17V16z" fill="#a9a9af"/></svg>
<div class="t" style="left:339.7px;top:915.64px;font-size:14.6px;color:#345d9a;-webkit-text-stroke:0.35px #345d9a">172.16.20.0/24</div>
<div class="a" style="left:523.5px;top:910px;width:82.2px;height:23.5px;background:#fff;border:1px solid #e2e2e5;border-radius:5px;box-shadow:0 1px 2px rgba(0,0,0,0.05)"></div>
<div class="t" style="left:528.5px;top:916.40px;font-size:12.29px;color:#333338;-webkit-text-stroke:0.15px #333338">Testing Team</div>
<div class="a" style="left:613.7px;top:910px;width:23px;height:24px;background:#5f55d8;border-radius:5px"></div>
<div class="t" style="left:613.7px;width:23px;text-align:center;top:916.99px;font-size:11px;color:#fff;-webkit-text-stroke:0.35px #fff">+2</div>
<div class="a" style="left:688.3px;top:910px;width:73.4px;height:23.5px;background:#fff;border:1px solid #e2e2e5;border-radius:5px;box-shadow:0 1px 2px rgba(0,0,0,0.05)"></div>
<div class="t" style="left:693.3px;top:916.59px;font-size:12.06px;color:#333338;-webkit-text-stroke:0.15px #333338">Zara Mcneil</div>
<div class="a" style="left:769.6999999999999px;top:910px;width:23px;height:24px;background:#5f55d8;border-radius:5px"></div>
<div class="t" style="left:769.6999999999999px;width:23px;text-align:center;top:916.99px;font-size:11px;color:#fff;-webkit-text-stroke:0.35px #fff">+2</div>
<div class="a" style="left:839.3px;top:910px;width:81.4px;height:23.5px;background:#efeff0;border-radius:5px"></div>
<div class="t" style="left:844.3px;top:916.11px;font-size:12.63px;color:#55555c;-webkit-text-stroke:0.15px #55555c">All Countries</div>
<svg class="a" style="left:1067.1px;top:914.2px;" width="15.5" height="16" viewBox="0 0 15.5 16"><rect x="1" y="1" width="13.2" height="13.6" rx="3" fill="none" stroke="#10984b" stroke-width="1.9"/><path d="M4.6 8l1.9 1.7 3.9-3.5" fill="none" stroke="#10984b" stroke-width="2" stroke-linecap="round" stroke-linejoin="round"/></svg>
<svg class="a" style="left:1189.5px;top:913.5px;" width="15" height="17" viewBox="0 0 15 17"><g fill="none" stroke="#46464d" stroke-width="1.7" stroke-linecap="round" stroke-linejoin="round"><path d="M1 3.5h13M5.5 3.5V2a1 1 0 0 1 1-1h2a1 1 0 0 1 1 1v1.5"/><path d="M2.5 3.5l.8 11a1.5 1.5 0 0 0 1.5 1.4h5.4a1.5 1.5 0 0 0 1.5-1.4l.8-11"/><path d="M6 7v5.5M9 7v5.5"/></g></svg>
<div class="a" style="left:1224.9px;top:902.1px;width:136.9px;height:39.4px;background:#fff;border:1px solid #dedee2;border-radius:7px;box-shadow:0 1px 2px rgba(0,0,0,0.04)"></div>
<div class="t" style="left:1239.5px;top:915.14px;font-size:14.95px;color:#46464d;">Test Connection</div>
</body></html>
